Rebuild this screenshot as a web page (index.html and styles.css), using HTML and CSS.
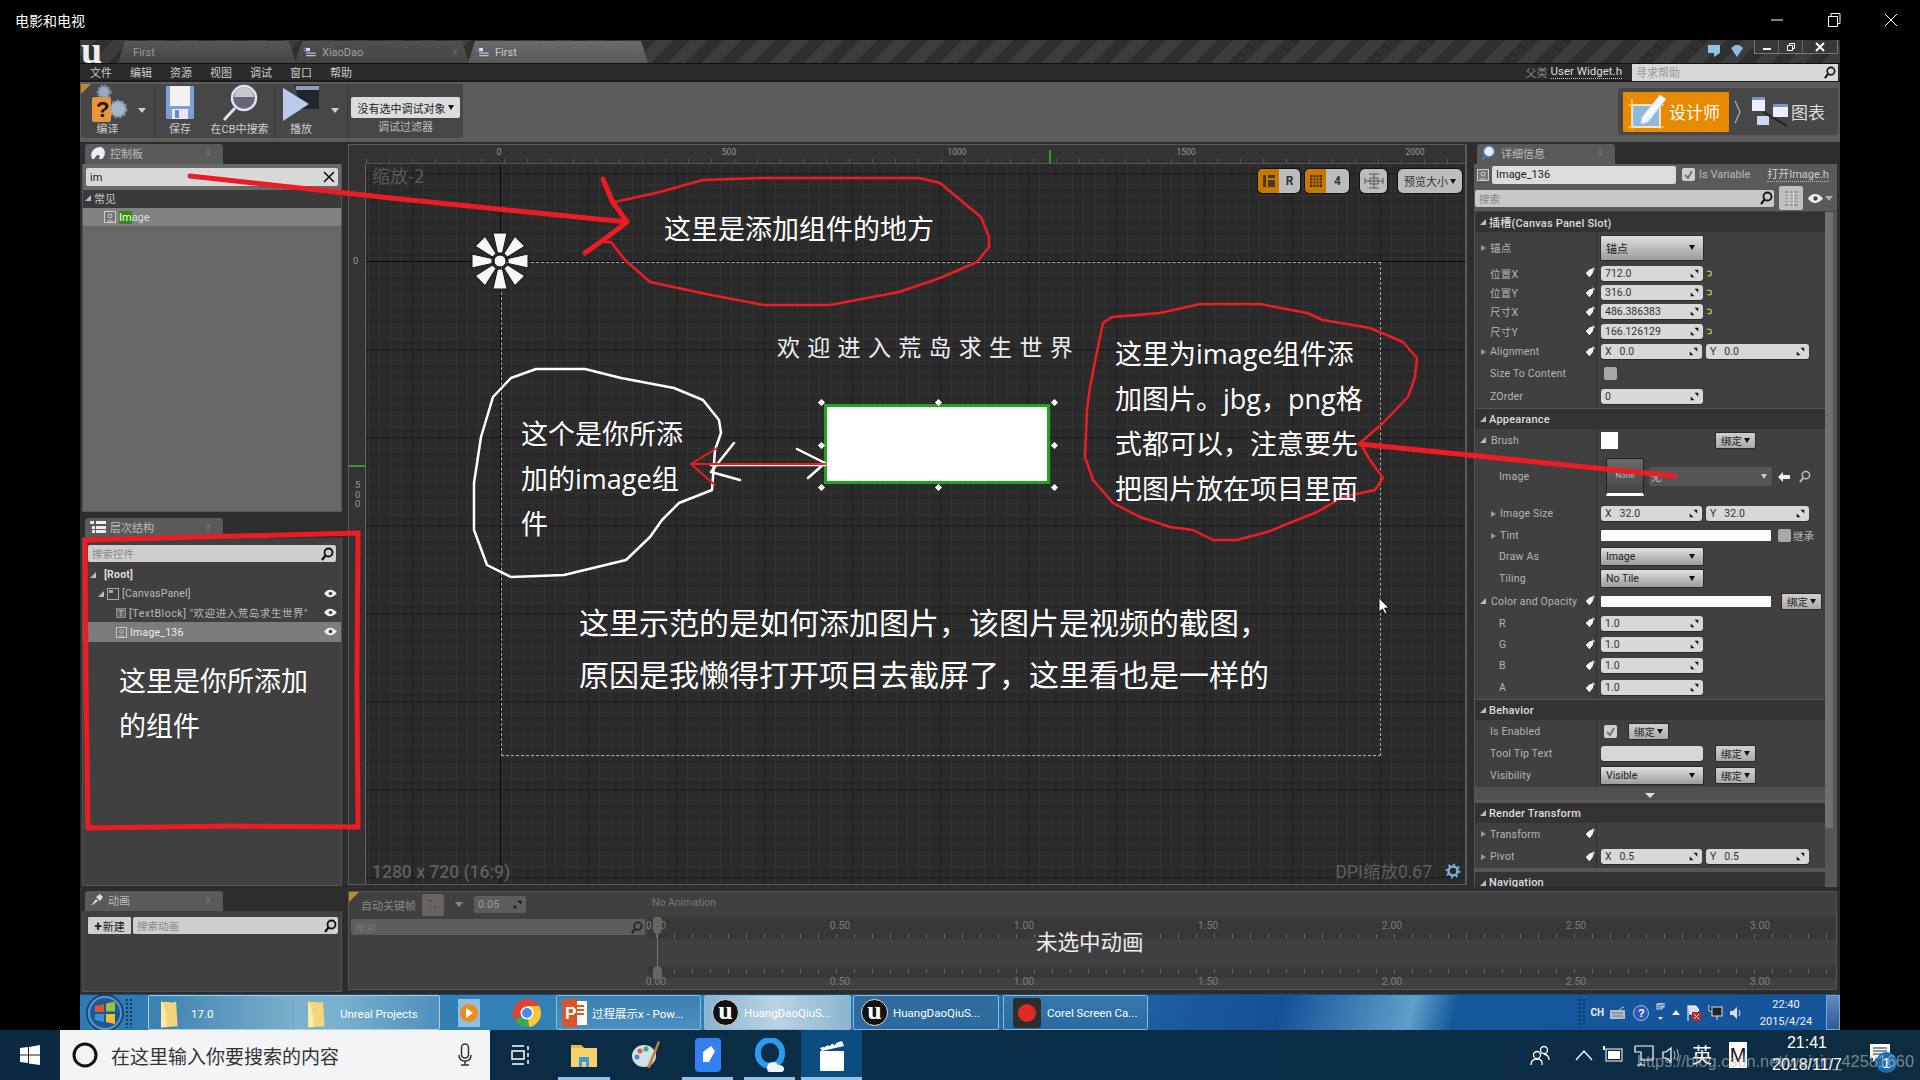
FILE: index.html
```html
<!DOCTYPE html>
<html lang="zh-CN">
<head>
<meta charset="utf-8">
<title>电影和电视</title>
<link rel="stylesheet" href="styles.css">
</head>
<body>
<svg class="defs" aria-hidden="true">
  <symbol id="i-key" viewBox="0 0 12 12"><path d="M1 6 6 1.5h3.5V6L5.5 11z" fill="#f4f4f4" stroke="#111" stroke-width=".8"/><path d="M9 .5v4M7.5 2h3.5" stroke="#eee" stroke-width=".9"/></symbol>
  <symbol id="i-spin" viewBox="0 0 12 12"><path d="M11 1v5L6 1zM1 11V6l5 5z" fill="#111"/></symbol>
  <symbol id="i-search" viewBox="0 0 14 14"><circle cx="8.5" cy="5.5" r="4" fill="none" stroke="#111" stroke-width="1.8"/><path d="M5.5 8.5 2 13" stroke="#111" stroke-width="2.2"/></symbol>
  <symbol id="i-eye" viewBox="0 0 14 10"><path d="M0 5c3-5 9-6 14 0-5 6-11 5-14 0z" fill="#eee"/><circle cx="7" cy="5" r="2" fill="#444"/></symbol>
  <symbol id="i-reset" viewBox="0 0 8 10"><path d="M1 2h4q2 0 2 3t-2 3H2" fill="none" stroke="#d8d84a" stroke-width="1.5"/></symbol>
  <symbol id="i-img" viewBox="0 0 12 12"><rect x=".5" y=".5" width="11" height="11" fill="#777" stroke="#ccc"/><circle cx="6" cy="5" r="2" fill="none" stroke="#ccc"/><path d="M3 10h6" stroke="#ccc"/></symbol>
  <symbol id="i-doc" viewBox="0 0 22 16"><path d="M2 1h9v5H2z" fill="#d8e4f0"/><path d="M5 8h15v2H5zM5 12h15v2H5z" fill="#b8c4d0"/><path d="M1 0h4v6H1z" fill="#4a78b8"/></symbol>
  <symbol id="i-folder" viewBox="0 0 28 40"><path d="M3 2q6 2 8 1 8 2 13 0l2 34-23 2z" fill="#f3d67a"/><path d="M3 2q6 3 8 36l-8 1z" fill="#fbeaa8"/></symbol>
</svg>

<div class="screen">
  <header class="app-title">
    <span class="app-name">电影和电视</span>
    <div class="win-btns">
      <svg width="14" height="14" viewBox="0 0 14 14"><path d="M1 7h12" stroke="#fff"/></svg>
      <svg width="14" height="14" viewBox="0 0 14 14"><path d="M1.5 3.5h9v10h-9zM4 3.5V.5h9v10h-2.5" fill="none" stroke="#fff"/></svg>
      <svg width="14" height="14" viewBox="0 0 14 14"><path d="M1 1l12 12M13 1 1 13" stroke="#fff"/></svg>
    </div>
  </header>

  <main class="ue">
    <div class="tabbar">
      <span class="ue-logo">u</span>
      <div class="doc-tab t1"><span>First</span></div>
      <div class="doc-tab t2"><svg width="14" height="11"><use href="#i-doc"/></svg><span>XiaoDao</span><i>x</i></div>
      <div class="doc-tab t3"><svg width="14" height="11"><use href="#i-doc"/></svg><span>First</span><i>x</i></div>
      <div class="tab-spacer"></div>
      <svg class="bubble" width="14" height="14" viewBox="0 0 14 14"><path d="M1 1h12v8l-6 4V9H1z" fill="#8fc4e8"/></svg>
      <svg class="bubble2" width="14" height="14" viewBox="0 0 14 14"><path d="M1 4 5 1h4l4 3-6 9z" fill="#8fb8e0"/></svg>
      <div class="frame-btns">
        <span class="fb"><svg width="10" height="8"><path d="M1 5h8v2H1z" fill="#fff"/></svg></span>
        <span class="fb"><svg width="10" height="10"><path d="M1.5 3.5h5v5h-5zM3.5 3V1.500h5v5H7" fill="none" stroke="#fff"/></svg></span>
        <span class="fb wide"><svg width="10" height="10"><path d="M1 1l8 8M9 1 1 9" stroke="#fff" stroke-width="2"/></svg></span>
      </div>
    </div>

    <nav class="menubar">
      <span>文件</span><span>编辑</span><span>资源</span><span>视图</span><span>调试</span><span>窗口</span><span>帮助</span>
      <div class="menu-right">
        <span class="parent">父类</span><span class="parent-link">User Widget.h</span>
        <div class="help-box"><span>寻求帮助</span><svg width="13" height="13"><use href="#i-search"/></svg></div>
      </div>
    </nav>

    <section class="toolbar">
      <div class="tool-group">
        <div class="tool w-compile">
          <svg width="44" height="38" viewBox="0 0 44 38"><circle cx="18" cy="8" r="6" fill="#9aa8c0" stroke="#78869e" stroke-width="3" stroke-dasharray="2 1.500"/><circle cx="32" cy="25" r="8" fill="#a8b4c8" stroke="#8390a8" stroke-width="3" stroke-dasharray="2.500 2"/><rect x="6" y="13" width="19" height="25" rx="2" fill="#e8953c"/><text x="10" y="33" class="qmark">?</text></svg>
          <span class="caret-small"></span>
          <label>编译</label>
        </div>
        <div class="tool w-save">
          <svg width="30" height="38" viewBox="0 0 30 38"><rect x="1" y="2" width="28" height="33" rx="1" fill="#7f9ed8"/><rect x="5" y="2" width="20" height="20" fill="#f2f2f2"/><rect x="7" y="25" width="16" height="10" fill="#e8e8f4"/><rect x="10" y="26" width="4" height="8" fill="#6a88c4"/></svg>
          <label>保存</label>
        </div>
        <div class="tool w-find">
          <svg width="38" height="38" viewBox="0 0 38 38"><circle cx="23" cy="14" r="12" fill="#667" stroke="#dfe6ee" stroke-width="2.500"/><path d="M13 13a10 10 0 0 1 20 0z" fill="#c4c8ce"/><path d="M14 24 3 36" stroke="#dde" stroke-width="3"/></svg>
          <label>在CB中搜索</label>
        </div>
        <div class="tool w-play">
          <svg width="38" height="38" viewBox="0 0 38 38"><path d="M13 1h24v24H18z" fill="#22262b"/><path d="M14 2h23v4H14z" fill="#8da0bb"/><path d="M1 4v33l26-17z" fill="#b9cbe8"/></svg>
          <span class="caret-small"></span>
          <label>播放</label>
        </div>
        <div class="tool-debug">
          <div class="debug-select">没有选中调试对象<b></b></div>
          <label>调试过滤器</label>
        </div>
      </div>
      <div class="mode-group">
        <div class="mode-on">
          <svg width="42" height="38" viewBox="0 0 42 38"><rect x="6" y="12" width="28" height="22" fill="#8fb8dc" stroke="#fff" stroke-width="1.500"/><path d="M2 12h36M6 6v30M2 34h36M34 8v28" stroke="#fbe0b0"/><path d="M16 24 34 2l6 4-18 23-7 2z" fill="#f4f7ff" stroke="#c8d4e8"/></svg>
          <span>设计师</span>
        </div>
        <svg class="mode-chev" width="8" height="24" viewBox="0 0 8 24"><path d="M1 1l5 11-5 11" fill="none" stroke="#aaa" stroke-width="1.300"/></svg>
        <svg class="mode-graph" width="38" height="32" viewBox="0 0 38 32"><rect x="1" y="2" width="13" height="13" fill="#eef"/><rect x="22" y="10" width="15" height="11" fill="#eef"/><rect x="6" y="20" width="12" height="9" fill="#ccd8ee"/><path d="M1 1h13v3H1zM22 8h15v3H22z" fill="#7894c4"/><path d="M12 16l24 14" stroke="#222" stroke-width="2"/></svg>
        <span class="mode-off">图表</span>
      </div>
    </section>

    <div class="workspace">
      <aside class="left-col">
        <div class="panel-tab">
          <svg width="16" height="14" viewBox="0 0 16 14"><path d="M2 13C-1 6 5 0 11 1c5 2 5 8 1 12H9c1-2 1-4-1-4s-3 3-4 4z" fill="#e8eef8"/></svg>
          <span>控制板</span><i>x</i>
        </div>
        <div class="palette">
          <div class="palette-search"><span>im</span><svg width="12" height="12" viewBox="0 0 12 12"><path d="M1 1l10 10M11 1 1 11" stroke="#111" stroke-width="1.600"/></svg></div>
          <div class="group-row"><span class="tri-down"></span><span>常见</span></div>
          <div class="palette-item"><svg width="12" height="12"><use href="#i-img"/></svg><mark>Im</mark><span>age</span></div>
        </div>

        <div class="panel-tab tab-hier">
          <svg width="16" height="12" viewBox="0 0 16 12"><path d="M0 0h4v3H0zM6 0h10v3H6zM2 5h3v3H2zM6 5h10v3H6zM6 9h10v3H6zM2 9h3v3H2z" fill="#eee"/></svg>
          <span>层次结构</span><i>x</i>
        </div>
        <div class="hierarchy">
          <div class="hier-search"><span>搜索控件</span><svg width="14" height="14"><use href="#i-search"/></svg></div>
          <div class="tree-row root"><span class="tri-down"></span><span>[Root]</span></div>
          <div class="tree-row canvas"><span class="tri-down"></span><svg width="12" height="12" viewBox="0 0 12 12"><rect x=".5" y=".5" width="11" height="11" fill="none" stroke="#aaa"/><rect x="2" y="2" width="4" height="3" fill="#aaa"/></svg><span>[CanvasPanel]</span><svg class="eye" width="13" height="9"><use href="#i-eye"/></svg></div>
          <div class="tree-row text"><svg width="10" height="10" viewBox="0 0 12 12"><rect x=".5" y=".5" width="11" height="11" fill="#666" stroke="#999"/><path d="M3 3h6M6 3v7" stroke="#ccc"/></svg><span>[TextBlock] "欢迎进入荒岛求生世界"</span><svg class="eye" width="13" height="9"><use href="#i-eye"/></svg></div>
          <div class="tree-row selected"><svg width="11" height="11"><use href="#i-img"/></svg><span>Image_136</span><svg class="eye" width="13" height="9"><use href="#i-eye"/></svg></div>
        </div>
      </aside>

      <section class="designer">
        <div class="ruler-corner"></div>
        <div class="ruler-top">
          <span class="rl r0">0</span><span class="rl r1">500</span><span class="rl r2">1000</span><span class="rl r3">1500</span><span class="rl r4">2000</span>
          <span class="sel-top"></span>
        </div>
        <div class="ruler-left"><span class="rv">0</span><span class="rv500">5<br>0<br>0</span><span class="sel-left"></span></div>
        <div class="viewport">
          <div class="axis-v"></div><div class="axis-h"></div>
          <div class="design-frame"></div>
          <span class="zoom-label">缩放-2</span>
          <span class="size-label">1280 x 720 (16:9)</span>
          <span class="dpi-label">DPI缩放0.67</span>
          <svg class="dpi-gear" width="16" height="16" viewBox="0 0 16 16"><circle cx="8" cy="8" r="4.500" fill="none" stroke="#7fb0e0" stroke-width="2.500"/><circle cx="8" cy="8" r="6.500" fill="none" stroke="#7fb0e0" stroke-width="2" stroke-dasharray="2 3"/></svg>
          <div class="vp-tools">
            <div class="seg s-a"><span class="seg-on"><svg width="12" height="14" viewBox="0 0 12 14"><path d="M0 1h3v12H0zM5 1h7v3H5zM5 6h7v7H5z" fill="#4a3a20"/></svg></span><span class="seg-off">R</span></div>
            <div class="seg s-b"><span class="seg-on"><svg width="14" height="14" viewBox="0 0 14 14"><path d="M1 1h12v12H1z" fill="#3a2a10"/><path d="M4 1v12M7 1v12M10 1v12M1 4h12M1 7h12M1 10h12" stroke="#d88400"/></svg></span><span class="seg-off">4</span></div>
            <div class="seg s-c"><svg width="20" height="16" viewBox="0 0 20 16"><path d="M1 8h18M10 1v14M1 5v6M19 5v6M5 1h10M5 15h10M6 5h8v6H6z" fill="none" stroke="#555"/></svg></div>
            <div class="seg s-d">预览大小<b></b></div>
          </div>
          <svg class="anchor" width="62" height="62" viewBox="-31 -31 62 62">
            <defs><path id="petal" d="M-2.500-8-7-28H7L2.500-8z" fill="#f6f6f6" stroke="#111" stroke-width="1"/></defs>
            <use href="#petal"/><use href="#petal" transform="rotate(45)"/><use href="#petal" transform="rotate(90)"/><use href="#petal" transform="rotate(135)"/><use href="#petal" transform="rotate(180)"/><use href="#petal" transform="rotate(225)"/><use href="#petal" transform="rotate(270)"/><use href="#petal" transform="rotate(315)"/>
            <circle r="6" fill="#f6f6f6" stroke="#111"/>
          </svg>
          <span class="welcome">欢迎进入荒岛求生世界</span>
          <div class="image-widget"></div>
          <i class="hd h-a"></i><i class="hd h-b"></i><i class="hd h-c"></i><i class="hd h-d"></i><i class="hd h-e"></i><i class="hd h-f"></i><i class="hd h-g"></i><i class="hd h-h"></i>
          <svg class="cursor" width="12" height="18" viewBox="0 0 12 18"><path d="M1 1v14l3.500-3 2.500 5 2-1-2.500-5H11z" fill="#fff" stroke="#000" stroke-width=".8"/></svg>
        </div>
      </section>

      <aside class="details">
        <div class="panel-tab det-tab">
          <svg width="16" height="16" viewBox="0 0 16 16"><circle cx="7" cy="6.500" r="5.500" fill="#e8eef8" stroke="#4a78c8" stroke-width="1.500"/><path d="M3 11 0 15" stroke="#4a78c8" stroke-width="2"/></svg>
          <span>详细信息</span><i>x</i>
        </div>
        <div class="det-body">
          <div class="name-row">
            <svg width="12" height="14"><use href="#i-img"/></svg>
            <div class="name-input">Image_136</div>
            <span class="check on"><svg width="11" height="11" viewBox="0 0 11 11"><path d="M2 6l3 3 4-7" fill="none" stroke="#777" stroke-width="2"/></svg></span>
            <span class="is-var">Is Variable</span>
            <span class="open-h">打开Image.h</span>
          </div>
          <div class="search-row">
            <div class="det-search"><span>搜索</span><svg width="14" height="14"><use href="#i-search"/></svg></div>
            <span class="grid-btn"><svg width="13" height="15" viewBox="0 0 13 15"><path d="M0 0h13v15H0z" fill="#999"/><path d="M0 3h13M0 6h13M0 9h13M0 12h13M4 0v15M8.500 0v15" stroke="#ddd"/></svg></span>
            <svg class="det-eye" width="15" height="11"><use href="#i-eye"/></svg><span class="tri-mini"></span>
          </div>
          <div class="det-scroll">
            <div class="cat first"><span class="tri-down"></span>插槽(Canvas Panel Slot)</div>
            <div class="rows rows-slot">
              <div class="row"><div class="lab"><span class="tri-right"></span>锚点</div><div class="val"><div class="combo big">锚点<b></b></div></div></div>
              <div class="row"><div class="lab sub-0"><span>位置X</span><svg class="key"><use href="#i-key"/></svg></div><div class="val"><div class="num w102">712.0<svg><use href="#i-spin"/></svg></div><svg class="reset"><use href="#i-reset"/></svg></div></div>
              <div class="row"><div class="lab sub-0"><span>位置Y</span><svg class="key"><use href="#i-key"/></svg></div><div class="val"><div class="num w102">316.0<svg><use href="#i-spin"/></svg></div><svg class="reset"><use href="#i-reset"/></svg></div></div>
              <div class="row"><div class="lab sub-0"><span>尺寸X</span><svg class="key"><use href="#i-key"/></svg></div><div class="val"><div class="num w102">486.386383<svg><use href="#i-spin"/></svg></div><svg class="reset"><use href="#i-reset"/></svg></div></div>
              <div class="row"><div class="lab sub-0"><span>尺寸Y</span><svg class="key"><use href="#i-key"/></svg></div><div class="val"><div class="num w102">166.126129<svg><use href="#i-spin"/></svg></div><svg class="reset"><use href="#i-reset"/></svg></div></div>
              <div class="row"><div class="lab"><span class="tri-right"></span>Alignment<svg class="key"><use href="#i-key"/></svg></div><div class="val"><div class="num w101"><em>X</em>0.0<svg><use href="#i-spin"/></svg></div><div class="num w103"><em>Y</em>0.0<svg><use href="#i-spin"/></svg></div></div></div>
              <div class="row"><div class="lab sub-0">Size To Content</div><div class="val"><span class="check"></span></div></div>
              <div class="row"><div class="lab sub-0">ZOrder</div><div class="val"><div class="num w102">0<svg><use href="#i-spin"/></svg></div></div></div>
            </div>
            <div class="cat"><span class="tri-down"></span>Appearance</div>
            <div class="rows rows-app">
              <div class="row"><div class="lab"><span class="tri-down"></span>Brush</div><div class="val"><span class="swatch"></span><span class="bind m-a">绑定<b></b></span></div></div>
              <div class="row"><div class="lab sub-1">Image</div><div class="val image-val"><div class="thumb"><span>None</span></div><div class="asset">无<b></b></div><svg class="back" width="12" height="10" viewBox="0 0 12 10"><path d="M0 5l5-5v3h7v4H5v3z" fill="#eee"/></svg><svg class="glass" width="13" height="13" viewBox="0 0 14 14"><circle cx="8.500" cy="5.500" r="4" fill="none" stroke="#bbb" stroke-width="1.600"/><path d="M5.500 8.500 2 13" stroke="#bbb" stroke-width="2"/></svg></div></div>
              <div class="row"><div class="lab sub-1"><span class="tri-right in"></span>Image Size</div><div class="val"><div class="num w101"><em>X</em>32.0<svg><use href="#i-spin"/></svg></div><div class="num w103"><em>Y</em>32.0<svg><use href="#i-spin"/></svg></div></div></div>
              <div class="row"><div class="lab sub-1"><span class="tri-right in"></span>Tint</div><div class="val"><span class="bar w170"></span><span class="check"></span><span class="inherit">继承</span></div></div>
              <div class="row"><div class="lab sub-1">Draw As</div><div class="val"><div class="combo">Image<b></b></div></div></div>
              <div class="row"><div class="lab sub-1">Tiling</div><div class="val"><div class="combo">No Tile<b></b></div></div></div>
              <div class="row"><div class="lab"><span class="tri-down"></span>Color and Opacity<svg class="key"><use href="#i-key"/></svg></div><div class="val"><span class="bar w170"></span><span class="bind m-b">绑定<b></b></span></div></div>
              <div class="row"><div class="lab sub-1">R<svg class="key"><use href="#i-key"/></svg></div><div class="val"><div class="num w102">1.0<svg><use href="#i-spin"/></svg></div></div></div>
              <div class="row"><div class="lab sub-1">G<svg class="key"><use href="#i-key"/></svg></div><div class="val"><div class="num w102">1.0<svg><use href="#i-spin"/></svg></div></div></div>
              <div class="row"><div class="lab sub-1">B<svg class="key"><use href="#i-key"/></svg></div><div class="val"><div class="num w102">1.0<svg><use href="#i-spin"/></svg></div></div></div>
              <div class="row"><div class="lab sub-1">A<svg class="key"><use href="#i-key"/></svg></div><div class="val"><div class="num w102">1.0<svg><use href="#i-spin"/></svg></div></div></div>
            </div>
            <div class="cat"><span class="tri-down"></span>Behavior</div>
            <div class="rows rows-beh">
              <div class="row"><div class="lab sub-0">Is Enabled</div><div class="val"><span class="check on"><svg width="11" height="11" viewBox="0 0 11 11"><path d="M2 6l3 3 4-7" fill="none" stroke="#777" stroke-width="2"/></svg></span><span class="bind m-c">绑定<b></b></span></div></div>
              <div class="row"><div class="lab sub-0">Tool Tip Text</div><div class="val"><div class="num w102"></div><span class="bind m-d">绑定<b></b></span></div></div>
              <div class="row"><div class="lab sub-0">Visibility</div><div class="val"><div class="combo">Visible<b></b></div><span class="bind m-d">绑定<b></b></span></div></div>
            </div>
            <div class="more"><span></span></div>
            <div class="cat"><span class="tri-down"></span>Render Transform</div>
            <div class="rows rows-rt">
              <div class="row"><div class="lab"><span class="tri-right"></span>Transform<svg class="key"><use href="#i-key"/></svg></div><div class="val"></div></div>
              <div class="row"><div class="lab"><span class="tri-right"></span>Pivot<svg class="key"><use href="#i-key"/></svg></div><div class="val"><div class="num w101"><em>X</em>0.5<svg><use href="#i-spin"/></svg></div><div class="num w103"><em>Y</em>0.5<svg><use href="#i-spin"/></svg></div></div></div>
            </div>
            <div class="cat nav"><span class="tri-down"></span>Navigation</div>
            <div class="scrollbar"></div>
          </div>
        </div>
      </aside>

      <aside class="anim-col">
        <div class="panel-tab">
          <svg width="14" height="14" viewBox="0 0 14 14"><path d="M1 13 6 6l2 2zM6 4l4-3 3 3-3 4z" fill="#dde"/></svg>
          <span>动画</span><i>x</i>
        </div>
        <div class="anim-body">
          <div class="new-btn"><b>+</b>新建</div>
          <div class="anim-search"><span>搜索动画</span><svg width="14" height="14"><use href="#i-search"/></svg></div>
        </div>
      </aside>

      <section class="timeline">
        <div class="tl-left">
          <div class="tl-auto">
            <span>自动关键帧</span>
            <span class="tl-key"><svg width="12" height="16" viewBox="0 0 12 16"><path d="M2 2h3v3H2zM1 12q3 2 4-2M7 8l3 2-3 3z" fill="#555"/></svg></span>
            <span class="tl-tri"></span>
            <span class="tl-num">0.05<svg width="9" height="9"><use href="#i-spin"/></svg></span>
          </div>
          <div class="tl-search"><span>搜索</span><svg width="13" height="13"><use href="#i-search"/></svg></div>
        </div>
        <div class="tl-right">
          <div class="tl-head">No Animation</div>
          <div class="tl-band top">
            <span>0.00</span><span>0.50</span><span>1.00</span><span>1.50</span><span>2.00</span><span>2.50</span><span>3.00</span>
          </div>
          <div class="tl-band bottom">
            <span>0.00</span><span>0.50</span><span>1.00</span><span>1.50</span><span>2.00</span><span>2.50</span><span>3.00</span>
          </div>
          <div class="tl-none">未选中动画</div>
          <i class="playhead"></i><i class="ph-a"></i><i class="ph-b"></i>
        </div>
      </section>
    </div>
  </main>

  <div class="win7">
    <div class="orb"><svg width="38" height="38" viewBox="0 0 38 38"><circle cx="19" cy="19" r="18" fill="#5a90c8" stroke="#123a5e" stroke-width="1.500"/><circle cx="19" cy="19" r="15" fill="#1a5a92"/><path d="M9 12l9-2v8H9z" fill="#e8502e"/><path d="M20 9.500l9-2v10h-9z" fill="#9ac03c"/><path d="M9 20h9v8l-9-2z" fill="#3e90d8"/><path d="M20 20h9v10l-9-2z" fill="#f0c030"/></svg></div>
    <div class="grip"></div>
    <div class="t7-group">
      <div class="t7 g-a"><svg width="20" height="30"><use href="#i-folder"/></svg><span>17.0</span></div>
      <div class="t7 g-b"><svg width="20" height="30"><use href="#i-folder"/></svg><span>Unreal Projects</span></div>
    </div>
    <svg class="t7-icon media" width="24" height="30" viewBox="0 0 24 30"><rect x="1" y="1" width="22" height="28" fill="#8fc0e4"/><circle cx="12" cy="15" r="9" fill="#f08a1c"/><path d="M9 10l7 5-7 5z" fill="#fff"/></svg>
    <svg class="t7-icon chrome" width="30" height="30" viewBox="0 0 30 30"><circle cx="15" cy="15" r="14" fill="#dc4437"/><path d="M15 15 3 22a14 14 0 0 1 0-14z" fill="#dc4437"/><path d="M3 22a14 14 0 0 0 14 7l7-12-9-2z" fill="#3aa757"/><path d="M17 29A14 14 0 0 0 27 8H15z" fill="#fcc934"/><circle cx="15" cy="15" r="6.500" fill="#fff"/><circle cx="15" cy="15" r="5" fill="#4a8af4"/></svg>
    <div class="t7 b-ppt"><svg width="26" height="30" viewBox="0 0 26 30"><path d="M10 3h15v24H10z" fill="#f8f8f8"/><path d="M13 8h9M13 12h9M13 16h9" stroke="#d85a2a" stroke-width="2"/><path d="M0 2l15-2v30L0 28z" fill="#d9542a"/><text x="3" y="21" class="p-letter">P</text></svg><span>过程展示x - Pow...</span></div>
    <div class="t7 b-ue light"><span class="ue-circle">u</span><span>HuangDaoQiuS...</span></div>
    <div class="t7 b-ue"><span class="ue-circle">u</span><span>HuangDaoQiuS...</span></div>
    <div class="t7 b-corel"><svg width="28" height="30" viewBox="0 0 28 30"><rect width="28" height="30" rx="3" fill="#2a2e33"/><circle cx="14" cy="15" r="9" fill="#e02a20"/></svg><span>Corel Screen Ca...</span></div>
    <div class="t7-spacer"></div>
    <div class="grip tray-grip"></div>
    <div class="t7-tray">
      <span class="ch">CH</span>
      <svg width="16" height="14" viewBox="0 0 16 14"><rect y="4" width="15" height="9" fill="#b0bcc8"/><path d="M2 7h11M2 10h11" stroke="#6c7884"/><path d="M9 4q2-2 5-3" stroke="#ccc" fill="none"/></svg>
      <svg width="16" height="16" viewBox="0 0 16 16"><circle cx="8" cy="8" r="7.500" fill="#3058b8" stroke="#9cb"/><text x="5" y="12" class="help-q">?</text></svg>
      <svg width="9" height="20" viewBox="0 0 9 20"><rect x="1" y="1" width="5" height="5" fill="none" stroke="#ddd"/><rect x="3" y="0" width="5" height="4" fill="none" stroke="#ddd"/><path d="M2 14h5l-2.500 3z" fill="#ddd"/></svg>
      <span class="tray-caret"></span>
      <svg width="14" height="18" viewBox="0 0 14 18"><path d="M1 1v16M1 2h8l3 4-3 4H2" fill="#dde" stroke="#fff"/><rect x="5" y="8" width="9" height="9" fill="#d02020"/><path d="M7 10l5 5M12 10l-5 5" stroke="#fff"/></svg>
      <svg width="15" height="18" viewBox="0 0 15 18"><rect x="4" y="3" width="10" height="9" fill="#222" stroke="#ddd"/><path d="M1 1v6h3M9 12v4" stroke="#ddd"/></svg>
      <svg width="12" height="14" viewBox="0 0 12 14"><path d="M0 5h3l4-4v12l-4-4H0z" fill="#ddd"/><path d="M9 4q2 3 0 6" stroke="#ddd" fill="none"/></svg>
    </div>
    <div class="t7-clock"><span>22:40</span><span>2015/4/24</span></div>
    <div class="show-desk"></div>
  </div>

  <footer class="win10">
    <span class="w10-start"><svg width="20" height="20" viewBox="0 0 20 20"><path d="M0 3l8-1v7.500H0zM9 2l11-2v9.500H9zM0 10.500h8V18l-8-1zM9 10.500h11V20L9 18.500z" fill="#fff"/></svg></span>
    <div class="w10-search">
      <svg width="28" height="28" viewBox="0 0 28 28"><circle cx="14" cy="14" r="11" fill="none" stroke="#111" stroke-width="3"/></svg>
      <span>在这里输入你要搜索的内容</span>
      <svg class="mic" width="14" height="24" viewBox="0 0 14 24"><rect x="3.500" y="1" width="7" height="14" rx="3.500" fill="none" stroke="#333" stroke-width="1.500"/><path d="M1 12q0 6 6 6t6-6M7 18v4M3 22h8" fill="none" stroke="#333" stroke-width="1.500"/></svg>
    </div>
    <span class="w10-app v-task"><svg width="22" height="22" viewBox="0 0 22 22"><path d="M2 2h12M2 20h12M2 7h12v8H2zM18 2v4M18 9v4M18 16v4" fill="none" stroke="#fff" stroke-width="1.500"/></svg></span>
    <span class="w10-app v-expl on"><svg width="28" height="26" viewBox="0 0 28 26"><path d="M1 3h10l3 3h13v19H1z" fill="#f7d26a"/><path d="M1 3h10l3 3H1z" fill="#e8b84a"/><path d="M9 15h10v10H9z" fill="#3f9ad8"/><path d="M12 20h4v5h-4z" fill="#f7d26a"/></svg></span>
    <span class="w10-app v-paint"><svg width="30" height="30" viewBox="0 0 30 30"><ellipse cx="13" cy="16" rx="12" ry="11" fill="#cfe0ea"/><circle cx="9" cy="11" r="2.500" fill="#e85050"/><circle cx="15" cy="9" r="2.500" fill="#40b060"/><circle cx="6" cy="17" r="2.500" fill="#4a88d8"/><path d="M27 1l2 1-10 26-3-1z" fill="#c4843c"/></svg></span>
    <span class="w10-app v-feather on"><svg width="26" height="34" viewBox="0 0 26 34"><rect width="26" height="34" rx="4" fill="#3580f0"/><path d="M8 24V14l8-6 4 5-6 11z" fill="#fff"/></svg></span>
    <span class="w10-app v-qq on"><svg width="30" height="34" viewBox="0 0 30 34"><rect x="3" y="2" width="24" height="26" rx="12" fill="none" stroke="#2a9cf0" stroke-width="6"/><path d="M12 30q0-6 6-6 4 0 5 3 6 0 6 4 0 3-3 3H14q-2-1-2-4z" fill="#eef6fc"/></svg></span>
    <span class="w10-app v-film active"><svg width="26" height="34" viewBox="0 0 26 34"><rect x="1" y="13" width="24" height="20" rx="1" fill="#fff"/><path d="M1 10 23 3l2 5L3 13z" fill="#fff"/><path d="M5 9l3-4M10 8l3-5M15 7l3-4" stroke="#0c4d80" stroke-width="1.500"/></svg></span>
    <div class="w10-tray">
      <svg class="p-1" width="20" height="22" viewBox="0 0 20 22"><circle cx="14" cy="6" r="3.500" fill="none" stroke="#fff" stroke-width="1.300"/><circle cx="7" cy="11" r="3.500" fill="none" stroke="#fff" stroke-width="1.300"/><path d="M1 21q0-6 6-6t5 6M14 10q5 1 5 6" fill="none" stroke="#fff" stroke-width="1.300"/></svg>
      <svg class="p-2" width="18" height="12" viewBox="0 0 18 12"><path d="M1 11 9 2l8 9" fill="none" stroke="#fff" stroke-width="1.300"/></svg>
      <svg class="p-3" width="20" height="18" viewBox="0 0 20 18"><rect x="3" y="4" width="16" height="12" fill="none" stroke="#fff"/><rect x="5" y="6" width="12" height="8" fill="#fff"/><path d="M1 1v4" stroke="#fff" stroke-width="2"/></svg>
      <svg class="p-4" width="20" height="22" viewBox="0 0 20 22"><path d="M1 2h18v14H7M1 2v6h6v9M7 18v3M3 21h8" fill="none" stroke="#fff" stroke-width="1.200"/></svg>
      <svg class="p-5" width="20" height="20" viewBox="0 0 20 20"><path d="M1 7h3l5-4v14l-5-4H1z" fill="none" stroke="#fff" stroke-width="1.200"/><path d="M12 6q2 4 0 8M15 4q3 6 0 12" fill="none" stroke="#bbb"/></svg>
      <span class="ime">英</span>
      <span class="ime-m">M</span>
      <div class="w10-clock"><span>21:41</span><span>2018/11/7</span></div>
      <span class="notif"><svg width="20" height="18" viewBox="0 0 20 18"><path d="M0 0h20v14H6l-3 4v-4H0z" fill="#fff"/><path d="M3 4h14M3 7h14M3 10h14" stroke="#123"/></svg><i>1</i></span>
    </div>
  </footer>
</div>

<div class="annot">
  <svg class="annot-svg" width="1920" height="1080" viewBox="0 0 1920 1080">
    <g fill="none" stroke-linejoin="round" stroke-linecap="round">
      <path class="red thick" d="M190 176 400 199 627 222M603 179 612 201 627 222 606 238 585 253"/>
      <path class="red" d="M615 202 660 192 703 180 760 178 860 178 919 178 940 183 964 203 981 217 989 237 989 247 977 262 940 278 899 292 830 305 764 305 711 295 650 282 625 260 611 242 605 242"/>
      <path class="white" d="M536 369 585 369 621 378 674 388 703 400 719 420 721 433 715 450 712 490 679 503 662 520 650 537 626 560 564 575 511 577 487 565 474 530 474 483 481 437 493 397 511 378z"/>
      <path class="white" d="M711 465H825M734 443 722 458 711 472 740 480M797 449 825 463 808 478"/>
      <path class="red thin" d="M691 464H825M717 448 691 464 715 485"/>
      <path class="red" d="M1103 323 1112 317 1160 313 1200 304 1260 304 1307 313 1323 320 1370 328 1403 342 1417 358 1415 377 1408 397 1383 423 1360 443 1370 460 1383 478 1375 490 1343 497 1317 512 1267 532 1237 540 1213 540 1193 530 1170 527 1140 517 1113 503 1093 480 1085 457 1087 410 1090 387 1100 337z"/>
      <path class="red thick" d="M1360 444 1675 476"/>
      <path class="red box" d="M85 540 200 537 358 533 357 680 358 827 230 826 88 828 86 680z"/>
    </g>
  </svg>
  <div class="note n-top">这里是添加组件的地方</div>
  <div class="note n-left">这个是你所添<br>加的image组<br>件</div>
  <div class="note n-right">这里为image组件添<br>加图片。jbg，png格<br>式都可以，注意要先<br>把图片放在项目里面</div>
  <div class="note n-hier">这里是你所添加<br>的组件</div>
  <div class="note n-main">这里示范的是如何添加图片，该图片是视频的截图，<br>原因是我懒得打开项目去截屏了，这里看也是一样的</div>
  <div class="watermark">https://blog.csdn.net/weixin_42581660</div>
</div>
</body>
</html>
```
FILE: styles.css
```css
*{box-sizing:border-box}
html,body{margin:0;padding:0;background:#000;overflow:hidden}
body{width:1920px;height:1080px;position:relative;font-family:Roboto,"Noto Sans CJK SC",sans-serif;font-size:10.5px;color:#bbb}
.defs{position:absolute;width:0;height:0}
label{display:block}
i{font-style:normal}
em{font-style:normal}

.screen{width:1920px;height:1080px;display:flex;flex-direction:column}

/* film app title */
.app-title{height:40px;flex:none;display:flex;align-items:center;justify-content:space-between;color:#fff;font:14px "Noto Sans CJK SC",sans-serif;padding:0 22px 0 15px}
.win-btns{display:flex;gap:43px}

/* UE window */
.ue{width:1760px;height:954px;flex:none;margin-left:80px;background:#2d2d2d;display:flex;flex-direction:column;overflow:hidden}
.tabbar{height:24px;flex:none;display:flex;align-items:flex-end;background:repeating-linear-gradient(135deg,#3c3c3c 0 12px,#2f2f2f 12px 24px);position:relative;border-bottom:1px solid #111}
.ue-logo{font:bold 38px/20px "Liberation Serif",serif;color:#eee;width:38px;flex:none;align-self:flex-start;padding-left:1px}
.doc-tab{height:22px;display:flex;align-items:center;gap:5px;color:#aaa;font-size:11px;clip-path:polygon(7px 0,calc(100% - 7px) 0,100% 100%,0 100%);padding:0 12px 0 7px;position:relative;flex:none}
.doc-tab i{position:absolute;right:11px;top:4px;color:#666;font-size:11px}
.doc-tab.t1{width:178px;background:linear-gradient(#565656,#444);padding-left:15px;color:#999}
.doc-tab.t2{width:174px;background:linear-gradient(#505050,#444);color:#a0a0a0;margin-left:-1px;padding-left:8px}
.doc-tab.t3{width:180px;background:linear-gradient(#6a6a6a,#595959);color:#c8c8c8;margin-left:-1px;padding-left:8px}
.tab-spacer{flex:1}
.bubble{margin:0 9px 5px 0}
.bubble2{margin:0 10px 5px 0}
.frame-btns{display:flex;align-self:flex-start;height:14px;margin-right:2px;border:1px solid #777;border-top:0;background:#383838}
.fb{width:24px;display:flex;align-items:center;justify-content:center;border-right:1px solid #666}
.fb.wide{width:34px;border-right:0}

.menubar{height:18px;flex:none;background:#2a2a2a;display:flex;align-items:center;font-size:11px;color:#ccc;padding-left:10px;gap:18px;border-bottom:2px solid #1c1c1c}
.menu-right{margin-left:auto;display:flex;align-items:center;height:100%}
.parent{color:#888;margin-right:3px}
.parent-link{color:#ddd;border-bottom:1px dotted #ccc;line-height:13px;font-size:11.5px;margin-right:10px}
.help-box{width:206px;height:18px;background:#d8d8d8;display:flex;align-items:center;justify-content:space-between;padding:0 2px 0 4px;color:#999;margin-right:2px}

.toolbar{height:60px;flex:none;background:#5c5c5c;display:flex;justify-content:space-between;padding:2px 2px 4px 1px;position:relative}
.tool-group{display:flex;background:#474747;border-radius:3px;width:382px;height:54px;position:relative}
.tool-group:before{content:"";position:absolute;left:0;top:0;border:5px solid #b88a30;border-right-color:transparent;border-bottom-color:transparent}
.tool{position:relative;display:flex;flex-direction:column;align-items:center;justify-content:flex-end;color:#ccc;font-size:11px;border-right:1px solid #393939;padding-bottom:2px;flex:none}
.tool svg{display:block}
.tool label{line-height:13px;margin-top:1px;white-space:nowrap}
.w-compile{width:74px;padding-right:20px}
.w-save{width:50px;border-right:0}
.w-find{width:70px}
.w-play{width:73px;padding-right:20px}
.qmark{font:bold 22px "Liberation Sans",sans-serif;fill:#201408}
.caret-small{position:absolute;right:8px;top:24px;border:4px solid transparent;border-top:5px solid #ccc;border-bottom:0}
.tool-debug{flex:1;display:flex;flex-direction:column;align-items:center;padding-top:13px;color:#bbb;font-size:11px}
.tool-debug label{margin-top:3px;line-height:14px}
.debug-select{width:109px;height:21px;background:#dcdcdc;color:#222;font-size:11px;display:flex;align-items:center;justify-content:center;gap:2px;border-radius:2px}
.debug-select b,.s-d b{border:3.500px solid transparent;border-top:5px solid #111;border-bottom:0;display:inline-block}
.mode-group{width:220px;height:47px;margin-top:4px;background:#474747;border-radius:3px;display:flex;align-items:center;padding-left:5px}
.mode-on{width:106px;height:40px;background:#e88a00;display:flex;align-items:center;gap:1px;color:#fff;font:17px "Noto Sans CJK SC",sans-serif;white-space:nowrap;padding-left:3px;border-radius:1px}
.mode-chev{margin:0 9px 0 5px}
.mode-off{font:17px "Noto Sans CJK SC",sans-serif;color:#ddd;margin-left:2px}

.workspace{flex:1;display:grid;grid-template-columns:268px 1121px 371px;grid-template-rows:745px 107px;min-height:0}

/* panels */
.panel-tab{width:138px;height:20px;background:#5a5a5a;border-radius:3px 3px 0 0;display:flex;align-items:center;gap:4px;padding:0 0 2px 5px;color:#bbb;font-size:11px;position:relative;margin-left:3px;flex:none}
.panel-tab i{position:absolute;right:12px;top:2px;color:#777;font-size:11px}
.left-col{padding:2px 0 0 2px;display:flex;flex-direction:column}
.tab-hier{margin-top:6px}
.palette{width:260px;height:348px;background:#686868;padding:4px 0 0 0;flex:none;border:1px solid #555;border-top:0}
.palette-search{width:252px;height:18px;margin-left:3px;background:#d8d8d8;border-radius:2px;display:flex;align-items:center;justify-content:space-between;padding:0 3px 0 4px;color:#222;font-size:11px}
.group-row{height:18px;margin-top:4px;background:#3a3a3a;display:flex;align-items:center;gap:3px;padding:0 0 2px 2px;color:#c8c8c8;font-size:11px}
.palette-item{height:18px;background:#828282;display:flex;align-items:center;padding-left:21px;color:#ddd;font-size:11px}
.palette-item svg{margin-right:3px}
.palette-item mark{background:#2f8a10;color:#fff}
.tri-down{display:inline-block;width:0;height:0;border-bottom:6px solid #bbb;border-left:6px solid transparent;flex:none}
.tri-right{display:inline-block;width:0;height:0;border:3.500px solid transparent;border-left:5px solid #999;border-right:0;margin:0 4px 0 1px;flex:none}
.tri-right.in{margin-left:-8px}

.hierarchy{width:260px;height:348px;background:#404040;border:1px solid #555;border-top:0;padding-top:7px;flex:none}
.hier-search{width:248px;height:17px;margin-left:5px;background:#cfcfcf;border-radius:2px;display:flex;align-items:center;justify-content:space-between;padding:0 2px 0 4px;color:#888}
.tree-row{height:19px;display:flex;align-items:center;gap:3px;color:#bbb;position:relative;letter-spacing:.2px}
.tree-row .eye{position:absolute;right:4px;top:5px}
.tree-row.root{margin-top:3px;padding-left:7px;color:#ddd;font-weight:700;gap:8px}
.tree-row.canvas{padding-left:15px}
.tree-row.text{padding-left:33px;font-size:10.500px;letter-spacing:.55px}
.tree-row.selected{height:20px;padding-left:33px;background:#7c7c7c;color:#eee}

/* designer */
.designer{display:grid;grid-template-columns:17px 1fr;grid-template-rows:19px 1fr;margin-top:2px;border:1px solid #5a5a5a;border-width:1px 2px 1px 1px;overflow:hidden;height:741px;width:1119px;margin-left:0}
.ruler-corner{background:#333}
.ruler-top{position:relative;background-color:#333;background-image:linear-gradient(to right,#555 1px,transparent 1px);background-size:23px 4px;background-repeat:repeat-x;background-position:0 100%;border-bottom:1px solid #555;color:#999;font-size:8.500px}
.rl{position:absolute;top:2px;transform:translateX(-50%)}
.r0{left:133px}.r1{left:363px}.r2{left:591px}.r3{left:820px}.r4{left:1049px}
.sel-top{position:absolute;left:683px;bottom:0;width:2px;height:13px;background:#2aa02a}
.ruler-left{position:relative;background:#333;color:#999;font-size:9.500px;border-right:1px solid #666}
.rv{position:absolute;left:4px;top:91px}
.rv500{position:absolute;left:6px;top:316px;line-height:9.500px}
.sel-left{position:absolute;left:0;right:0;top:301px;height:2px;background:#2aa02a}

.viewport{position:relative;overflow:hidden;background-color:#2a2a2a;
  background-image:linear-gradient(to right,#1c1c1c 1px,transparent 1px),linear-gradient(to bottom,#1c1c1c 1px,transparent 1px),linear-gradient(to right,#333 1px,transparent 1px),linear-gradient(to bottom,#333 1px,transparent 1px);
  background-size:88px 88px,88px 88px,11px 11px,11px 11px;
  background-position:46px 0,0 9px,2px 0,0 9px}
.axis-v{position:absolute;left:134px;top:0;bottom:0;width:1px;background:#0a0a0a}
.axis-h{position:absolute;top:97px;left:0;right:0;height:1px;background:#0a0a0a}
.design-frame{position:absolute;left:135px;top:98px;width:880px;height:494px;border:1px dashed #aaa}
.zoom-label{position:absolute;left:6px;top:-2px;font:18px "Noto Sans CJK SC",sans-serif;color:#585858}
.size-label{position:absolute;left:6px;bottom:2px;font:500 17.500px Roboto,sans-serif;color:#5e5e5e}
.dpi-label{position:absolute;right:33px;bottom:1px;font:17.500px Roboto,"Noto Sans CJK SC",sans-serif;color:#5e5e5e}
.dpi-gear{position:absolute;right:4px;bottom:5px}
.vp-tools{position:absolute;top:5px;left:892px;display:flex;font-size:12px;color:#333}
.seg{height:24px;background:#bcbcbc;border-radius:5px;display:flex;align-items:center;justify-content:center;overflow:hidden;box-shadow:0 0 0 1px #111}
.seg-on{width:21px;height:100%;background:#c87800;display:flex;align-items:center;justify-content:center}
.seg-off{flex:1;text-align:center;font-weight:700}
.s-a{width:42px}.s-b{width:44px;margin-left:5px}.s-c{width:27px;margin-left:11px}
.s-d{width:64px;margin-left:11px;gap:2px;font-size:11px;font-family:"Noto Sans CJK SC",sans-serif}
.anchor{position:absolute;left:103px;top:66px}
.welcome{position:absolute;left:411px;top:167px;font:23px/30px "Noto Sans CJK SC",sans-serif;letter-spacing:7.300px;color:#eee;white-space:nowrap}
.image-widget{position:absolute;left:458px;top:240px;width:226px;height:80px;background:#fff;border:3px solid #22a322}
.hd{position:absolute;width:5px;height:5px;background:#fff;transform:rotate(45deg)}
.h-a{left:453px;top:236px}.h-b{left:570px;top:236px}.h-c{left:686px;top:236px}
.h-d{left:453px;top:279px}.h-e{left:686px;top:279px}
.h-f{left:453px;top:321px}.h-g{left:570px;top:321px}.h-h{left:686px;top:321px}
.cursor{position:absolute;left:1012px;top:433px}

/* details */
.details{padding:2px 0 0 5px;display:flex;flex-direction:column;height:745px}
.det-tab{margin-left:3px;gap:3px}
.det-body{width:363px;flex:1;background:#5a5a5a;overflow:hidden}
.name-row{height:21px;display:flex;align-items:center;padding-left:3px;gap:3px;color:#bbb}
.name-input{width:184px;height:18px;background:#dcdcdc;color:#222;font-size:11px;display:flex;align-items:center;padding-left:4px;border-radius:2px}
.check{width:13px;height:13px;background:#a8a8a8;border-radius:2px;display:inline-flex;align-items:center;justify-content:center;flex:none;margin-left:3px}
.check.on{background:#d0d0d0}
.is-var{margin-left:1px;font-size:11px}
.open-h{margin-left:14px;font-size:11px;border-bottom:1px dotted #bbb;line-height:13px;white-space:nowrap;color:#ccc}
.search-row{height:26px;display:flex;align-items:center;padding-left:1px}
.det-search{width:299px;height:17px;background:#c8c8c8;border-radius:2px;display:flex;align-items:center;justify-content:space-between;padding:0 1px 0 4px;color:#888}
.grid-btn{width:24px;height:24px;margin-left:5px;background:#c0c0c0;border-radius:2px;display:flex;align-items:center;justify-content:center}
.det-eye{margin-left:5px}
.tri-mini{border:4px solid transparent;border-top:5px solid #aaa;border-bottom:0;margin-left:2px}
.det-scroll{position:relative;height:703px;padding:0 12px 0 1px;margin-top:0;background:#575757;border-top:1px solid #444}
.cat{height:21px;background:#333;display:flex;align-items:center;gap:3px;color:#ddd;font-size:11px;font-weight:500;padding-left:5px;letter-spacing:.2px;border-top:1px solid #555}
.cat.first{height:20px;border-top:0}
.cat.nav{margin-top:3px;height:22px;overflow:hidden}
.rows{display:grid;background:#404040}
.rows-slot{grid-template-rows:31px 20px 19px 19px 20px 21px 23px 23px}
.rows-app{grid-template-rows:22px 51px 23px 21px 21px 23px 22px 22px 21px 21px 23px}
.rows-beh{grid-template-rows:22px 22px 23px}
.rows-rt{grid-template-rows:22px 23px}
.row{display:flex;align-items:center;min-height:0}
.lab{width:122px;height:100%;flex:none;display:flex;align-items:center;border-right:1px solid #2e2e2e;padding-left:5px;position:relative;color:#b4b4b4;white-space:nowrap;letter-spacing:.2px}
.lab.sub-0{padding-left:15px}
.lab.sub-1{padding-left:24px}
.lab .tri-down{margin-right:5px}
.lab .tri-right{margin-right:4px}
.key{position:absolute;right:0;top:50%;margin-top:-6px;width:12px;height:12px}
.val{flex:1;display:flex;align-items:center;padding-left:4px;gap:4px;height:100%;min-width:0;color:#222}
.num{height:15px;background:#d8d8d8;border-radius:3px;display:flex;align-items:center;padding-left:4px;color:#333;position:relative;flex:none;box-shadow:0 1px 0 #2a2a2a}
.num svg{position:absolute;right:4px;top:3px;width:9px;height:9px}
.num em{margin-right:8px}
.w102{width:102px}.w101{width:101px}.w103{width:103px}
.reset{width:6px;height:9px;margin-left:-1px}
.combo{width:102px;height:17px;background:linear-gradient(#e0e0e0,#9c9c9c);border-radius:1px;display:flex;align-items:center;justify-content:space-between;padding:0 8px 0 5px;color:#222;box-shadow:0 0 0 1px #2a2a2a;flex:none}
.combo.big{height:24px;padding-left:5px;font-size:11px}
.combo b,.bind b,.asset b{border:3.500px solid transparent;border-top:5px solid #111;border-bottom:0;display:inline-block}
.swatch{width:17px;height:17px;background:#fff;flex:none}
.bind{width:39px;height:15px;background:linear-gradient(#cfcfcf,#aaa);box-shadow:0 0 0 1px #2a2a2a;display:flex;align-items:center;justify-content:center;gap:2px;color:#222;border-radius:1px;flex:none}
.m-a{margin-left:94px}.m-b{margin-left:7px}.m-c{margin-left:8px}.m-d{margin-left:9px}
.image-val{padding-left:9px;gap:5px}
.thumb{width:38px;height:38px;background:linear-gradient(#6a6a6a,#444);border:1px solid #222;border-bottom:3px solid #fff;display:flex;align-items:center;justify-content:center;color:#bbb;font-size:8px;flex:none}
.asset{width:123px;height:19px;background:#555;border-radius:2px;display:flex;align-items:center;justify-content:space-between;padding:0 5px 0 2px;color:#ccc}
.asset b{border-top-color:#ccc}
.back{margin-left:1px}
.glass{margin-left:3px}
.bar{height:11px;background:#fff;flex:none;border-radius:1px}
.w170{width:170px}
.inherit{color:#b4b4b4;margin-left:-2px}
.more{height:15px;background:#505050;display:flex;align-items:center;justify-content:center;border-bottom:2px solid #5c5c5c}
.more span{border:5px solid transparent;border-top:5px solid #ddd;border-bottom:0;margin-top:3px}
.scrollbar{position:absolute;right:4px;top:0;width:8px;height:616px;background:#707070}

/* animations */
.anim-col{padding:4px 0 0 2px;display:flex;flex-direction:column}
.anim-body{width:260px;height:81px;background:#404040;border:1px solid #555;border-top:0;display:flex;gap:2px;padding:6px 0 0 5px;align-items:flex-start}
.new-btn{width:43px;height:17px;background:#cfcfcf;color:#222;font-size:11px;display:flex;align-items:center;justify-content:center;gap:1px;border-radius:1px}
.new-btn b{font-size:14px;line-height:14px}
.anim-search{width:205px;height:17px;background:#cfcfcf;border-radius:2px;display:flex;align-items:center;justify-content:space-between;padding:0 1px 0 4px;color:#888}

.timeline{grid-column:2 / 4;margin-top:4px;height:99px;width:1489px;background:#404040;border:1px solid #555;display:flex;position:relative;overflow:hidden}
.timeline:before{content:"";position:absolute;left:0;top:0;border:5px solid #b88a30;border-right-color:transparent;border-bottom-color:transparent}
.tl-left{width:299px;flex:none;padding-left:2px}
.tl-auto{height:25px;display:flex;align-items:center;gap:6px;padding-left:10px;color:#888;font-size:11px}
.tl-key{width:22px;height:22px;background:#6a6460;border-radius:2px;display:flex;align-items:center;justify-content:center}
.tl-tri{border:4px solid transparent;border-top:5px solid #888;border-bottom:0;margin-left:5px}
.tl-num{width:52px;height:17px;background:#5c5c5c;border-radius:2px;display:flex;align-items:center;justify-content:space-between;padding:0 4px;color:#999;font-size:11px;margin-left:5px}
.tl-search{width:294px;height:16px;margin-top:2px;background:#5f5f5f;border-radius:2px;display:flex;align-items:center;justify-content:space-between;padding:0 2px 0 4px;color:#777;opacity:.95}
.tl-search svg{opacity:.8}
.tl-right{flex:1;position:relative;min-width:0}
.tl-head{height:25px;padding:4px 0 0 4px;color:#777;font-size:10.500px}
.tl-band{height:22px;background:#383838;display:flex;color:#7d7d7d;background-image:linear-gradient(to right,#666 1px,transparent 1px);background-size:18px 4px;background-repeat:repeat-x}
.tl-band.top{background-position:8px 17px;align-items:flex-start}
.tl-band.bottom{height:11px;margin-top:28px;background-position:8px 2px;align-items:flex-start}
.tl-band span{width:184px;flex:none;text-align:center;line-height:14px}
.tl-band span:first-child{margin-left:-84px}
.tl-band.top span{margin-top:2px}
.tl-band.bottom span{margin-top:8px}
.tl-none{position:absolute;left:388px;top:34px;font:21.500px/29px "Noto Sans CJK SC",sans-serif;color:#eee}
.playhead{position:absolute;left:9px;top:26px;width:1px;height:62px;background:#777}
.ph-a{position:absolute;left:5px;top:25px;width:9px;height:17px;background:#6a6460;border-radius:3px 3px 5px 5px}
.ph-b{position:absolute;left:5px;top:74px;width:9px;height:13px;background:#6a6460;border-radius:5px 5px 2px 2px}

/* win7 bar */
.win7{height:36px;width:1760px;margin-left:80px;flex:none;background:linear-gradient(105deg,#2e7ab4 0,#3382b6 30%,#2a72b0 50%,#154f98 68%,#5f9fc8 75.500%,#15579c 78%,#14549c 100%);display:flex;align-items:center;position:relative;border-top:1px solid #1c4a78;color:#f2f2f2;font-size:11.500px}
.orb{width:40px;height:36px;margin-left:5px;display:flex;align-items:center;justify-content:center;flex:none}
.grip{width:9px;height:30px;background-image:radial-gradient(#123a5e 1px,transparent 1px);background-size:4px 4px;flex:none}
.t7-group{display:flex;width:292px;height:35px;margin-left:14px;border:1px solid #a8d0e8;border-radius:2px;background:linear-gradient(90deg,#3a80b0,#7cb0cc 50%,#7bb0cf 65%,#4e90bc);flex:none}
.t7{display:flex;align-items:center;gap:12px;height:35px;color:#fff;flex:none;white-space:nowrap}
.g-a{width:145px;padding-left:10px;border-right:1px solid #6ea4c8;gap:12px}
.g-b{flex:1;padding-left:12px;gap:14px;width:146px}
.t7-icon.media{margin-left:17px}
.t7-icon.chrome{margin-left:31px}
.t7-icon{flex:none}
.b-ppt{width:145px;margin-left:14px;padding-left:5px;gap:4px;background:linear-gradient(#3c80b0,#4d90bf);border:1px solid #8abcd8;border-radius:2px}
.b-ue{width:146px;margin-left:2px;padding-left:7px;gap:5px;background:linear-gradient(#2e6c9e,#2d6aa0);border:1px solid #8abcd8;border-radius:2px}
.b-ue.light{background:linear-gradient(90deg,#88b4d0,#bcd4e2 50%,#8ab4d0);margin-left:3px;width:147px}
.b-corel{width:145px;margin-left:4px;padding-left:9px;gap:6px;background:linear-gradient(#3677ac,#2a6aa2);border:1px solid #8abcd8;border-radius:2px}
.ue-circle{width:27px;height:27px;border-radius:50%;background:#111;border:1px solid #ddd;color:#fff;font:bold 26px/21px "Liberation Serif",serif;text-align:center;flex:none}
.p-letter{font:bold 17px "Liberation Sans",sans-serif;fill:#fff}
.t7-spacer{flex:1}
.tray-grip{margin-right:3px}
.t7-tray{display:flex;align-items:center;gap:7px;margin-right:14px}
.ch{font-size:10px;font-weight:700;color:#eee;margin-right:-1px}
.help-q{font:bold 11px "Liberation Sans",sans-serif;fill:#fff}
.tray-caret{border:4px solid transparent;border-bottom:5px solid #eee;border-top:0}
.t7-clock{display:flex;flex-direction:column;align-items:center;width:60px;font-size:11px;line-height:17px}
.show-desk{width:14px;height:35px;margin-left:10px;background:linear-gradient(#5e8cc0,#2a5c98);border:1px solid #7ca4cc}

/* win10 bar */
.win10{height:50px;flex:none;background:linear-gradient(90deg,#0c2a42,#0b2e48 60%,#0d2c42);display:flex;align-items:stretch;position:relative;color:#fff}
.w10-start{width:60px;display:flex;align-items:center;justify-content:center}
.w10-search{width:430px;background:#f3f4f6;display:flex;align-items:center;padding:0 18px 0 11px;color:#333;font:19px "Noto Sans CJK SC",sans-serif;gap:12px;white-space:nowrap}
.mic{margin-left:auto}
.w10-app{display:flex;align-items:center;justify-content:center;flex:none;height:50px;position:relative;width:52px}
.w10-app.on:after{content:"";position:absolute;left:0;right:0;bottom:0;height:3px;background:#8fc4ea}
.v-task{margin-left:5px}
.v-expl{margin-left:11px}
.v-paint{margin-left:10px;width:51px}
.v-feather{margin-left:11px;width:51px}
.v-qq{margin-left:11px;width:51px}
.v-film{margin-left:6px;width:61px;background:#0c4d80}
.v-film:after{content:"";position:absolute;left:0;right:0;bottom:0;height:3px;background:#8fc4ea}
.w10-tray{position:absolute;right:0;top:0;height:50px;width:400px}
.w10-tray svg,.ime,.ime-m,.w10-clock,.notif{position:absolute}
.p-1{left:10px;top:14px}.p-2{left:55px;top:19px}.p-3{left:83px;top:15px}.p-4{left:114px;top:14px}.p-5{left:142px;top:15px}
.ime{left:172px;top:10px;font:20px "Noto Sans CJK SC",sans-serif}
.ime-m{left:209px;top:12px;width:18px;height:26px;background:#fff;color:#111;font:20px/26px "Liberation Sans",sans-serif;text-align:center}
.w10-clock{left:242px;top:2px;width:90px;display:flex;flex-direction:column;align-items:center;font:16px/22px "Liberation Sans",sans-serif}
.notif{left:350px;top:14px}
.notif svg{position:static;display:block}
.notif i{position:absolute;left:6px;top:8px;width:21px;height:21px;border-radius:50%;background:#1a6cb0;font:15px/21px "Liberation Sans",sans-serif;text-align:center;color:#fff}

/* annotations */
.annot{position:absolute;left:0;top:0;width:1920px;height:1080px;pointer-events:none}
.annot-svg{position:absolute;left:0;top:0}
.red{stroke:#ed1c24;stroke-width:2.500}
.red.thick{stroke-width:5}
.red.thin{stroke-width:2}
.red.box{stroke-width:5;stroke-linejoin:miter}
.white{stroke:#fff;stroke-width:2.500}
.note{position:absolute;color:#fff;font-family:"Open Sans","Noto Sans CJK SC",sans-serif;font-size:27px;line-height:45px;white-space:nowrap}
.n-top{left:664px;top:206px}
.n-left{left:521px;top:411px}
.n-right{left:1115px;top:331px}
.n-hier{left:119px;top:658px}
.n-main{left:579px;top:597px;font-size:30px;line-height:52px}
.watermark{position:absolute;left:1637px;top:1051px;color:rgba(190,190,190,.62);font:16.300px/20px "Liberation Sans",sans-serif;white-space:nowrap}
```
